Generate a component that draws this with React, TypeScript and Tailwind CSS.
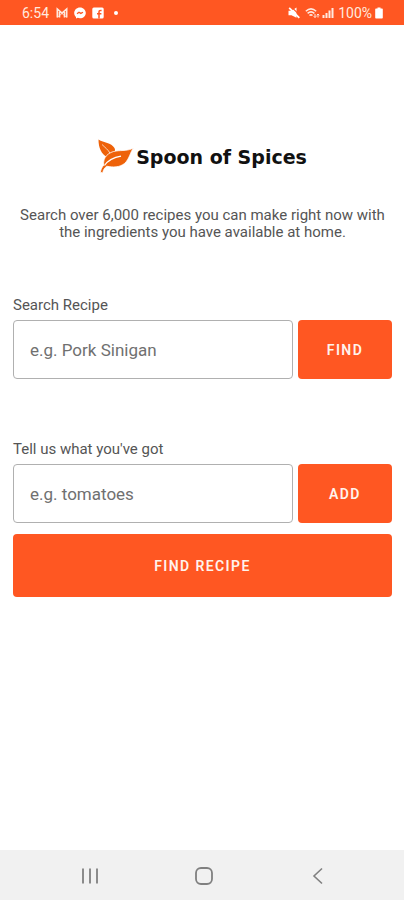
import { useState } from "react";
import type { FormEvent } from "react";

interface SearchFieldProps {
  id: string;
  label: string;
  placeholder: string;
  action: string;
}

function StatusBar() {
  return (
    <header className="flex h-[25px] items-center justify-between bg-[#ff5722] pl-[22px] pr-[21px] text-[#ffe9df]">
      <div className="flex items-center">
        <span className="w-[34px] text-sm leading-4">6:54</span>
        {/* Mail */}
        <svg className="h-3 w-3" viewBox="0 0 12 12" fill="none" stroke="currentColor" aria-hidden="true">
          <path d="M1.3 10.500V2L6 6.200 10.700 2v8.500M3.500 10.500V5M8.500 10.500V5" strokeWidth="1.600" />
          <path d="M1.500 10.200 6 6.500l4.500 3.700" strokeWidth="0.800" />
        </svg>
        {/* Messenger */}
        <svg className="ml-[6px] h-3 w-3" viewBox="0 0 12 12" aria-hidden="true">
          <path d="M6 .4C2.700.4.2 2.800.2 6c0 1.600.7 3 1.800 4v1.600l1.700-.8c.7.3 1.500.4 2.300.4 3.300 0 5.800-2.300 5.800-5.300S9.300.4 6 .4z" fill="#fff" />
          <path d="M3 6.800 5 5.200l1.800 1.200L9 5.200" fill="none" stroke="#ff5722" strokeWidth="1.300" />
        </svg>
        {/* Facebook */}
        <svg className="ml-[6px] h-3 w-3" viewBox="0 0 12 12" aria-hidden="true">
          <rect x="0.300" y="0.500" width="11.400" height="11" rx="1.500" fill="#fff" />
          <path d="M7 11.500V5q0-1.800 2.600-1.600M5 6.800h4.400" fill="none" stroke="#ff5722" strokeWidth="1.500" />
        </svg>
        <span className="ml-[10px] h-1 w-1 rounded-full bg-white" />
      </div>
      <div className="flex items-center">
        {/* Muted */}
        <svg className="h-3 w-3" viewBox="0 0 12 12" aria-hidden="true">
          <path d="M.5 3.800h3L8.500.500v10.300L3.500 8.200h-3z" fill="#fff" />
          <path d="M3.500 0 12.500 9" stroke="#ff5722" strokeWidth="1.200" />
          <path d="M1.200.8 11.300 10.900" stroke="#fff" strokeWidth="1.800" />
        </svg>
        {/* Wi-Fi */}
        <svg className="ml-[5px] h-3 w-4" viewBox="0 0 16 12" fill="none" stroke="currentColor" aria-hidden="true">
          <path d="M.8 4.200Q6-.4 11.200 4.200M2.600 6.400q3.400-3 6.800 0M4.500 8.500q1.500-1.300 3 0" strokeWidth="1.500" />
          <path d="M10 7v3.500M8.700 9.200 10 10.500l1.300-1.300M13 10.500V7M11.700 8.300 13 7l1.300 1.300" strokeWidth="1" />
        </svg>
        {/* Signal */}
        <svg className="ml-px h-3 w-3" viewBox="0 0 12 12" fill="currentColor" aria-hidden="true">
          <path d="M.5 8h2v3h-2zM3.500 6h2v5h-2zM6.500 3.500h2V11h-2zM9.500 1h2v10h-2z" />
        </svg>
        <span className="ml-1 text-sm leading-4">100%</span>
        {/* Battery */}
        <svg className="ml-[3px] h-3 w-2" viewBox="0 0 8 12" fill="#fff" aria-hidden="true">
          <path d="M2.500.5h3v1H7q.8 0 .8.8v8.400q0 .8-.8.8H1q-.8 0-.8-.8V2.300q0-.8.8-.8h1.500z" />
        </svg>
      </div>
    </header>
  );
}

function Logo() {
  return (
    <div className="flex items-center justify-center gap-[2px]">
      <svg className="h-9 w-9" viewBox="0 0 36 36" aria-hidden="true">
        <path d="M.5.5C6 4.200 13 3.500 16.500 9q.8 1.800.5 3.500L9 18C3.500 15 .5 9 .5.5z" fill="#ee6209" />
        <path d="M35.500 9C32 13.500 31.500 20 26.500 24.500 21.500 28.500 15 28.500 8.800 27.200 6.300 29 5.200 31 4.700 34l-2.300-.8c.4-3.200 1.800-5.200 3.400-7.200C4.500 18.500 10.500 13 18 12c6.500-.8 12 0 17.500-3z" fill="#ee6209" stroke="#fff" strokeWidth="0.800" />
        <path d="M4 5.500C7 8.500 10 10.500 12 14.200" fill="none" stroke="#fff" strokeWidth="0.700" />
        <path d="M6.500 26.500c3.500-5 8.500-8 16.500-9.300" fill="none" stroke="#fff" strokeWidth="1.200" />
      </svg>
      <h1 className="font-['DejaVu_Sans',sans-serif] text-[19px] font-bold leading-7 text-[#111111]">Spoon of Spices</h1>
    </div>
  );
}

function SearchField({ id, label, placeholder, action }: SearchFieldProps) {
  const [value, setValue] = useState("");

  const handleSubmit = (e: FormEvent) => {
    e.preventDefault();
    setValue("");
  };

  return (
    <form onSubmit={handleSubmit}>
      <label htmlFor={id} className="block text-[15px] leading-4 text-[#555555]">
        {label}
      </label>
      <div className="mt-[7px] flex gap-[5px]">
        <input
          id={id}
          type="text"
          value={value}
          onChange={(e) => setValue(e.target.value)}
          placeholder={placeholder}
          className="h-[59px] min-w-0 flex-1 rounded border border-[#b0b0b0] bg-white px-4 text-[17px] text-[#333333] placeholder:text-[#707070]"
        />
        <button
          type="submit"
          className="h-[59px] w-[94px] rounded bg-[#ff5722] text-sm font-semibold tracking-widest text-[#fff3ec]"
        >
          {action}
        </button>
      </div>
    </form>
  );
}

function NavBar() {
  return (
    <nav className="flex h-[50px] items-center justify-center gap-[90px] bg-[#f1f1f1] pl-1 pt-[2px] text-[#808080]">
      <button type="button" aria-label="Recent apps">
        <svg className="h-6 w-6" viewBox="0 0 24 24" fill="none" stroke="currentColor" strokeWidth="1.800">
          <path d="M5 4.500v15M12 4.500v15M19 4.500v15" />
        </svg>
      </button>
      <button type="button" aria-label="Home">
        <svg className="h-6 w-6" viewBox="0 0 24 24" fill="none" stroke="currentColor" strokeWidth="1.800">
          <rect x="4" y="4" width="16" height="16" rx="5" />
        </svg>
      </button>
      <button type="button" aria-label="Back">
        <svg className="h-6 w-6" viewBox="0 0 24 24" fill="none" stroke="currentColor" strokeWidth="1.600">
          <path d="M16 4.500 8 12l8 7.500" />
        </svg>
      </button>
    </nav>
  );
}

export default function App() {
  return (
    <div className="flex min-h-screen flex-col bg-white font-[Roboto,sans-serif]">
      <StatusBar />
      <main className="flex-1 pl-[13px] pr-3 pt-[114px]">
        <Logo />
        <p className="mt-8 text-center text-[15px] leading-[17px] text-[#555555]">
          Search over 6,000 recipes you can make right now with
          <br />
          the ingredients you have available at home.
        </p>
        <div className="mt-14 flex flex-col gap-[62px]">
          <SearchField id="recipe" label="Search Recipe" placeholder="e.g. Pork Sinigan" action="FIND" />
          <SearchField id="ingredient" label="Tell us what you've got" placeholder="e.g. tomatoes" action="ADD" />
        </div>
        <button
          type="button"
          className="mt-[11px] h-[63px] w-full rounded bg-[#ff5722] text-sm font-semibold tracking-widest text-[#fff3ec]"
        >
          FIND RECIPE
        </button>
      </main>
      <NavBar />
    </div>
  );
}
